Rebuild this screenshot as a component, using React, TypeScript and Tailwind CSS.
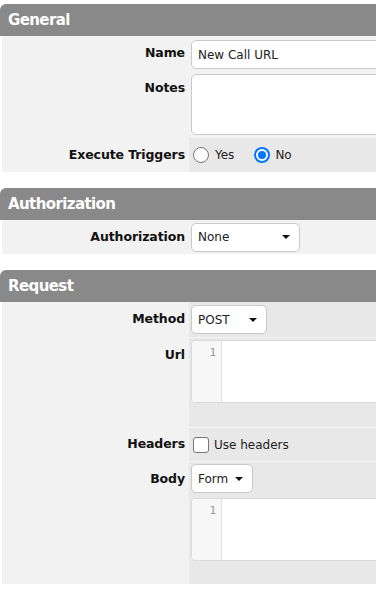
// Formulario de acción "New Call URL"
// - Secciones con cabecera gris y filas etiqueta / valor
// - Se recorta a 376px de ancho, el contenido sigue más allá del borde
import type { ReactNode } from 'react'

const font = { fontFamily: '"DejaVu Sans", Verdana, sans-serif' }

function Section({ title, children }: { title: string; children: ReactNode }) {
  return (
    <section className="w-[440px]">
      <div className="h-[32px] bg-[#898989] rounded-t-[6px] pl-[8px] flex items-center text-white font-bold text-[15px] tracking-[-0.6px]">
        {title}
      </div>
      <div className="ml-[2px] bg-[#f2f2f2]">{children}</div>
    </section>
  )
}

// Fila de la tabla: etiqueta a la izquierda (189px), valor a la derecha
function Row({
  label,
  children,
  dark = false,
  top = false,
  h,
  labelPt = 'pt-[9px]',
  border = false,
}: {
  label?: string
  children?: ReactNode
  dark?: boolean
  top?: boolean
  h: string
  labelPt?: string
  border?: boolean
}) {
  return (
    <div className={`flex ${h}`}>
      <div
        className={`w-[187px] shrink-0 flex justify-end pr-[4px] text-[12.5px] font-bold text-[#111] tracking-[-0.1px] ${
          top ? `items-start ${labelPt}` : 'items-center'
        }`}
      >
        {label}
      </div>
      <div
        className={`flex-1 pl-[2px] ${dark ? 'bg-[#e8e8e8]' : ''} ${
          border ? 'border-t border-[#f4f4f4]' : ''
        }`}
      >
        {children}
      </div>
    </div>
  )
}

function Select({ value, w }: { value: string; w: string }) {
  return (
    <div
      className={`${w} h-[29px] bg-white border border-[#c9c9c9] rounded-[5px] flex items-center justify-between pl-[6px] pr-[9px] text-[12px] text-[#222]`}
    >
      <span>{value}</span>
      <span className="w-0 h-0 border-l-[4px] border-r-[4px] border-t-[4px] border-l-transparent border-r-transparent border-t-[#111]" />
    </div>
  )
}

function Editor() {
  return (
    <div className="h-[63px] bg-white border border-[#dadada] rounded-l-[4px] flex">
      <div
        className="w-[30px] bg-[#f7f7f7] border-r border-[#e3e3e3] rounded-l-[4px] flex justify-end pr-[5px] pt-[4px] text-[11px] text-[#999]"
        style={{ fontFamily: '"DejaVu Sans Mono", monospace' }}
      >
        1
      </div>
      <div className="flex-1" />
    </div>
  )
}

function Radio({ checked }: { checked?: boolean }) {
  return checked ? (
    <span className="block w-[16px] h-[16px] rounded-full bg-[#0075ff] p-[2px]">
      <span className="block w-full h-full rounded-full bg-[#0075ff] border-[2px] border-white" />
    </span>
  ) : (
    <span className="block w-[16px] h-[16px] rounded-full border border-[#767676] bg-white" />
  )
}

export default function App() {
  return (
    <div className="w-[376px] h-[600px] overflow-hidden bg-white pt-[4px]" style={font}>
      <Section title="General">
        <Row label="Name" h="h-[35px]">
          <div className="mt-[4px] h-[29px] bg-white border border-[#c9c9c9] rounded-[5px] flex items-center pl-[6px] text-[12px] text-[#222]">
            New Call URL
          </div>
        </Row>
        <Row label="Notes" h="h-[67px]" top labelPt="pt-[8px]">
          <div className="mt-[3px] h-[61px] bg-white border border-[#c9c9c9] rounded-[5px]" />
        </Row>
        <Row label="Execute Triggers" h="h-[34px]" dark>
          <div className="h-full flex items-center text-[12px] text-[#222]">
            <span className="ml-[2px]">
              <Radio />
            </span>
            <span className="ml-[6px]">Yes</span>
            <span className="ml-[20px]">
              <Radio checked />
            </span>
            <span className="ml-[5px]">No</span>
          </div>
        </Row>
      </Section>

      <div className="h-[16px]" />

      <Section title="Authorization">
        <Row label="Authorization" h="h-[34px]">
          <div className="h-full flex items-center">
            <Select value="None" w="w-[109px]" />
          </div>
        </Row>
      </Section>

      <div className="h-[16px]" />

      <Section title="Request">
        <Row label="Method" h="h-[35px]" dark>
          <div className="h-full flex items-center">
            <Select value="POST" w="w-[76px]" />
          </div>
        </Row>
        <Row label="Url" h="h-[90px]" dark top labelPt="pt-[9px]" border>
          <div className="pt-[2px]">
            <Editor />
          </div>
        </Row>
        <Row label="Headers" h="h-[34px]" dark border>
          <div className="h-full flex items-center text-[12px] text-[#222]">
            <span className="ml-[2px] w-[16px] h-[16px] border border-[#767676] rounded-[3px] bg-white" />
            <span className="ml-[5px]">Use headers</span>
          </div>
        </Row>
        <Row label="Body" h="h-[123px]" dark top labelPt="pt-[9px]" border>
          <div className="pt-[2px]">
            <Select value="Form" w="w-[62px]" />
            <div className="mt-[5px]">
              <Editor />
            </div>
          </div>
        </Row>
      </Section>
    </div>
  )
}
